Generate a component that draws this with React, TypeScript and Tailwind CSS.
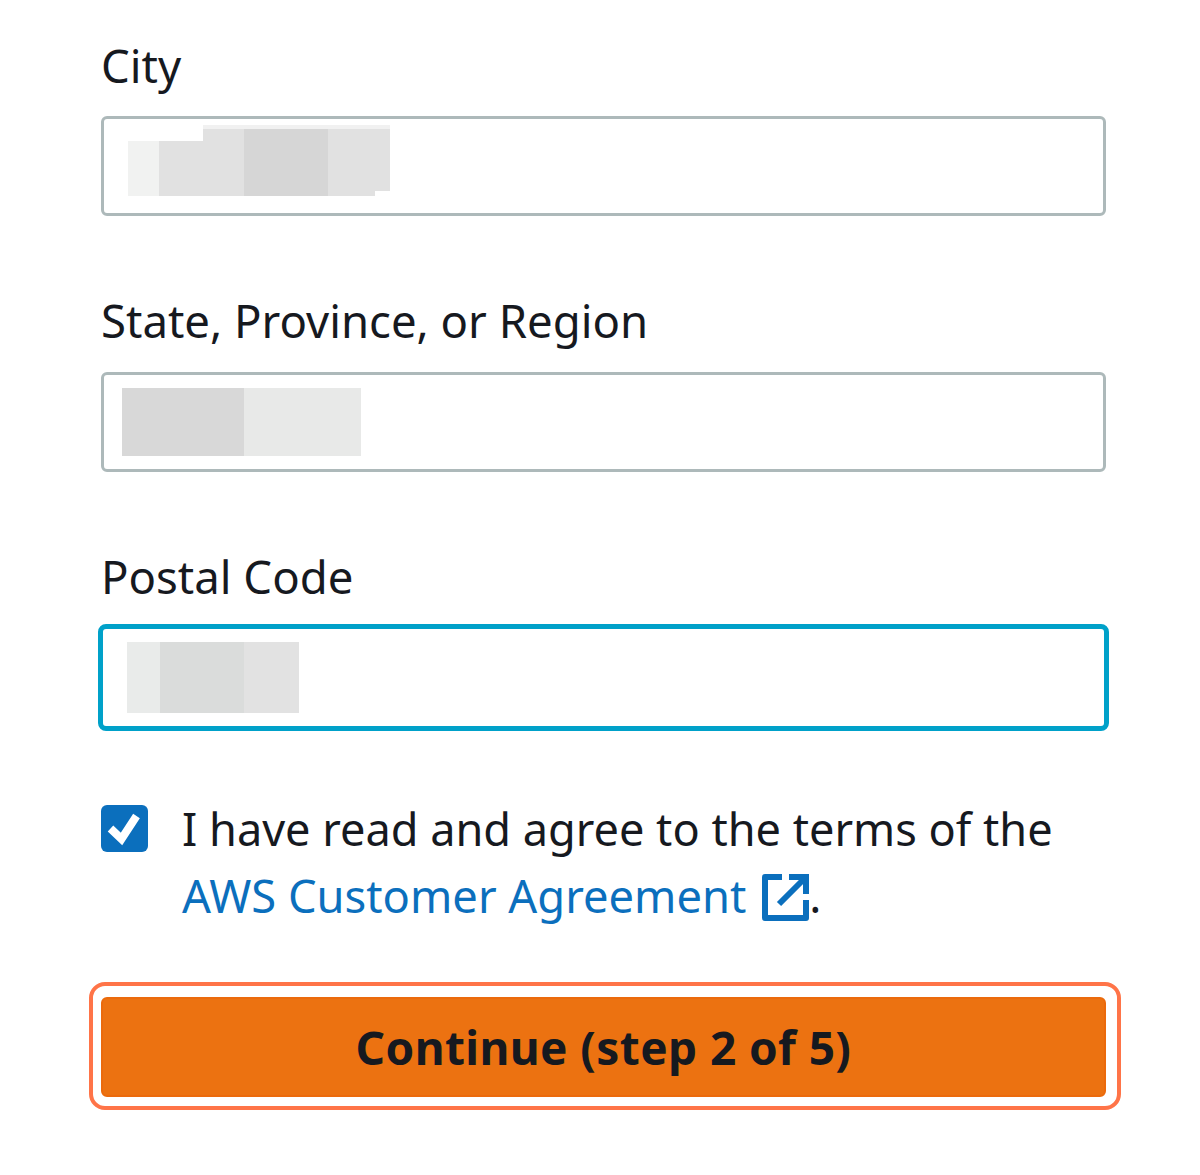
function ExternalIcon() {
	return (
		<svg
			className="inline-block w-[47px] h-[47px] align-[-8px] ml-[16px]"
			viewBox="0 0 47 47"
			fill="none"
			stroke="#0b6fbd"
			strokeWidth="6"
		>
			<path d="M20 3H3V44H44V26" strokeLinejoin="round" />
			<path d="M27 3H44V20" />
			<path d="M44 3L17 30" />
		</svg>
	);
}

function Label({ children }: { children: string }) {
	return (
		<label className="block h-[65px] leading-[65px] text-[45.5px] text-[#16191f]">
			{children}
		</label>
	);
}

export default function App() {
	return (
		<div
			className="bg-white w-[1200px] h-[1175px] pl-[101px] pr-[94px] pt-[33px]"
			style={{ fontFamily: '"Noto Sans", "Open Sans", sans-serif' }}
		>
			<Label>City</Label>
			<div className="mt-[18px] h-[100px] border-[3px] border-[#adb9ba] rounded-[6px] pl-[24px] flex items-end pb-[17px]">
				<div className="w-[31px] h-[55px] bg-[#f1f2f1]" />
				<div className="w-[44px] h-[55px] bg-[#e1e1e1]" />
				<div className="w-[41px] h-[71px] bg-[#e1e1e1] border-t-4 border-[#f1f1f1]" />
				<div className="w-[84px] h-[71px] bg-[#d6d6d6] border-t-4 border-[#f1f1f1]" />
				<div className="w-[47px] h-[71px] bg-[#e1e1e1] border-t-4 border-[#f1f1f1]" />
				<div className="w-[15px] h-[66px] mb-[5px] bg-[#e1e1e1] border-t-4 border-[#f1f1f1]" />
			</div>

			<div className="mt-[72px]">
				<Label>State, Province, or Region</Label>
			</div>
			<div className="mt-[19px] h-[100px] border-[3px] border-[#adb9ba] rounded-[6px] pl-[18px] flex items-center">
				<div className="w-[122px] h-[68px] bg-[#d8d8d8]" />
				<div className="w-[117px] h-[68px] bg-[#e8e9e8]" />
			</div>

			<div className="mt-[72px]">
				<Label>Postal Code</Label>
			</div>
			<div className="mt-[15px] -mx-[3px] h-[107px] border-[5px] border-[#00a1c9] rounded-[8px] pl-[24px] flex items-center">
				<div className="w-[33px] h-[71px] bg-[#e9ebea]" />
				<div className="w-[84px] h-[71px] bg-[#dadcdb]" />
				<div className="w-[55px] h-[71px] bg-[#e2e2e2]" />
			</div>

			<div className="mt-[74px] flex items-start">
				<div className="w-[47px] h-[47px] rounded-[6px] bg-[#0b6fbd] flex items-center justify-center shrink-0">
					<svg className="w-[47px] h-[47px]" viewBox="0 0 47 47" fill="none">
						<path
							d="M9.5 23.5L20.5 34L35.5 11"
							stroke="white"
							strokeWidth="8"
							strokeLinejoin="miter"
						/>
					</svg>
				</div>
				<p className="ml-[34px] -mt-[10px] text-[45.1px] leading-[67px] text-[#16191f] whitespace-nowrap">
					I have read and agree to the terms of the
					<br />
					<a className="text-[#0b6fbd] text-[45.3px]">
						AWS Customer Agreement
						<ExternalIcon />
					</a>
					.
				</p>
			</div>

			<div className="mt-[53px] -ml-[12px] -mr-[15px] border-[4px] border-[#ff7448] rounded-[16px] pl-[8px] pr-[11px] pt-[11px] pb-[9px]">
				<button className="w-full h-[100px] bg-[#ec7211] border-2 border-[#eb6a0c] rounded-[6px] text-[46px] tracking-[0.4px] font-bold text-[#16191f]">
					Continue (step 2 of 5)
				</button>
			</div>
		</div>
	);
}
